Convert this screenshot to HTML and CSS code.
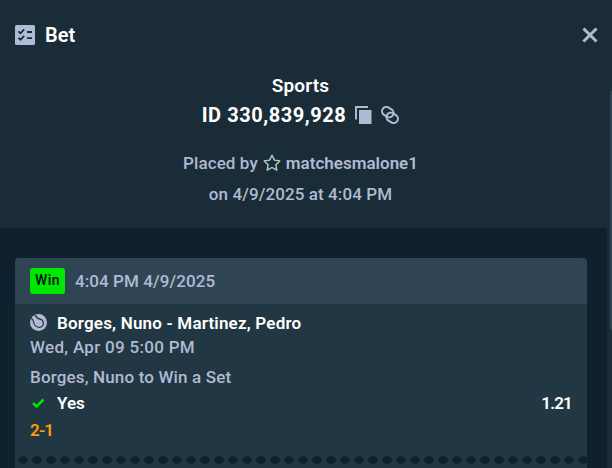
FILE: index.html
```html
<!DOCTYPE html>
<html lang="en">
<head>
  <meta charset="UTF-8">
  <title>Bet</title>
  <link rel="stylesheet" href="styles.css">
</head>
<body>
  <div class="modal">
    <div class="modal-header">
      <svg class="bet-icon" width="20" height="20" viewBox="0 0 20 20">
        <rect width="20" height="20" rx="1.5" fill="#b1bad3"/>
        <path d="M3.5 6.4l2 1.9 3.7-3.9M3.5 12.8l2 1.9 3.7-3.9M12 7h5M12 13.2h5" fill="none" stroke="#1a2c38" stroke-width="1.8"/>
      </svg>
      <h1>Bet</h1>
      <svg class="close" width="16" height="16" viewBox="0 0 16 16">
        <path d="M2.5 2.5l11 11M13.5 2.5l-11 11" stroke="#b1bad3" stroke-width="3" stroke-linecap="square"/>
      </svg>
    </div>

    <div class="summary">
      <h2>Sports</h2>
      <div class="bet-id">
        <span class="id-text">ID 330,839,928</span>
        <svg width="17" height="18" viewBox="0 0 17 18">
          <path d="M0 0h13v2H2v11.5H0z" fill="#b1bad3"/>
          <path d="M4 4h12.500v14H4z" fill="#b1bad3"/>
        </svg>
        <svg class="link" width="18" height="18" viewBox="0 0 18 18" fill="none" stroke="#b1bad3" stroke-width="2">
          <rect x="0.800" y="1.800" width="12" height="8.600" rx="4.300" transform="rotate(32 6.800 6.100)"/>
          <rect x="5.200" y="7.600" width="12" height="8.600" rx="4.300" transform="rotate(32 11.200 11.900)"/>
        </svg>
      </div>
      <p class="placed">
        <span class="placed-by">Placed by</span>
        <svg width="18" height="17" viewBox="0 0 18 17">
          <path d="M9 1.200l2.400 4.900 5.400.8-3.900 3.800.9 5.400L9 13.500l-4.800 2.600.9-5.400L1.200 6.900l5.400-.8z" fill="none" stroke="#b2d2cd" stroke-width="1.400" stroke-linejoin="round"/>
        </svg>
        <b>matchesmalone1</b>
      </p>
      <p class="placed-at">on 4/9/2025 at 4:04 PM</p>
    </div>

    <div class="content">
      <div class="card">
        <div class="card-header">
          <span class="badge">Win</span>
          <span class="time">4:04 PM 4/9/2025</span>
        </div>
        <div class="card-body">
          <div class="match">
            <svg width="17" height="18" viewBox="0 0 17 18">
              <circle cx="8.500" cy="8.500" r="8.500" fill="#b1bad3"/>
              <path d="M1.300 4.300C2.700 5.300 3.300 6.300 3.600 8c.6 3.200 2.700 5.200 5.600 5.300 2.700 0 4.300-1.600 4.200-4.100-.1-2.300-1.300-3.600-3.500-4.100C7.600 4.600 6.200 3.600 5.200 1" fill="none" stroke="#213743" stroke-width="1.200"/>
            </svg>
            <span class="match-name">Borges, Nuno - Martinez, Pedro</span>
          </div>
          <div class="date">Wed, Apr 09 5:00 PM</div>
          <div class="market">Borges, Nuno to Win a Set</div>
          <div class="outcome">
            <svg width="17" height="14" viewBox="0 0 17 14">
              <path d="M3 7l3.500 3.400 7-6.900" fill="none" stroke="#00e701" stroke-width="2.500"/>
            </svg>
            <span class="pick">Yes</span>
            <span class="odds">1.21</span>
          </div>
          <div class="score">2-1</div>
        </div>
        <div class="dots"></div>
      </div>
    </div>
    <div class="scroll-thumb"></div>
  </div>
</body>
</html>
```

FILE: styles.css
```css
* {
  box-sizing: border-box;
}

body {
  margin: 0;
  height: 468px;
  overflow: hidden;
  background: #1a2c38;
  color: #b1bad3;
  font-family: Roboto, "Liberation Sans", sans-serif;
  font-size: 17px;
  font-weight: 500;
}

h1, h2, p {
  margin: 0;
}

svg {
  display: block;
  flex: none;
}

.modal {
  position: relative;
  height: 468px;
  overflow: hidden;
}

.modal-header {
  display: flex;
  align-items: center;
  height: 70px;
  padding: 0 14px 0 15px;
}

.modal-header h1 {
  margin-left: 10px;
  color: #fff;
  font-size: 20px;
  font-weight: 600;
}

.close {
  margin-left: auto;
}

.summary {
  height: 158px;
  width: 601px;
}

.summary h2 {
  color: #fff;
  font-size: 19px;
  font-weight: 600;
  line-height: 31px;
  letter-spacing: 0.2px;
  text-align: center;
}

.bet-id {
  display: flex;
  align-items: center;
  justify-content: center;
  gap: 9px;
  height: 28px;
  color: #fff;
  font-size: 20px;
  font-weight: 700;
  letter-spacing: 0.55px;
}

.placed {
  display: flex;
  align-items: center;
  justify-content: center;
  gap: 5px;
  height: 31px;
  margin-top: 18px;
}

.placed-by {
  letter-spacing: 0.1px;
}

.placed b {
  font-weight: 600;
}

.placed-at {
  line-height: 33px;
  letter-spacing: 0.1px;
  text-align: center;
}

.content {
  width: 607px;
  height: 240px;
  padding: 30px 20px 0 15px;
  background: #0f212e;
}

.card {
  height: 240px;
  overflow: hidden;
  background: #213743;
  border-radius: 4px 4px 0 0;
}

.card-header {
  display: flex;
  align-items: center;
  height: 46px;
  padding: 0 15px;
  background: #2f4553;
}

.badge {
  width: 35px;
  height: 26px;
  margin-right: 10px;
  border-radius: 3px;
  background: #00e701;
  color: #05200f;
  font-size: 14px;
  font-weight: 600;
  letter-spacing: 0.4px;
  line-height: 25px;
  text-align: center;
}

.time {
  letter-spacing: 0.08px;
}

.card-body {
  height: 152px;
  padding: 7px 15px 0;
  line-height: 24px;
}

.match, .outcome {
  display: flex;
  align-items: center;
  gap: 10px;
  color: #fff;
  font-weight: 600;
}

.match-name {
  letter-spacing: 0.19px;
}

.date {
  letter-spacing: 0.3px;
}

.market {
  margin-top: 6px;
  letter-spacing: 0.16px;
}

.outcome {
  height: 27px;
}

.odds {
  margin-left: auto;
  letter-spacing: -0.8px;
}

.score {
  color: #ff9d00;
  font-weight: 600;
  letter-spacing: -0.8px;
  line-height: 29px;
}

.dots {
  height: 8px;
  margin-left: 1px;
  background: radial-gradient(ellipse 5px 4px at center, #0f212e 90%, transparent) 0 0 / 14px 8px repeat-x;
}

.scroll-thumb {
  position: absolute;
  top: 90px;
  right: -6px;
  width: 8px;
  height: 241px;
  border-radius: 4px;
  background: #2f4553;
}
```
